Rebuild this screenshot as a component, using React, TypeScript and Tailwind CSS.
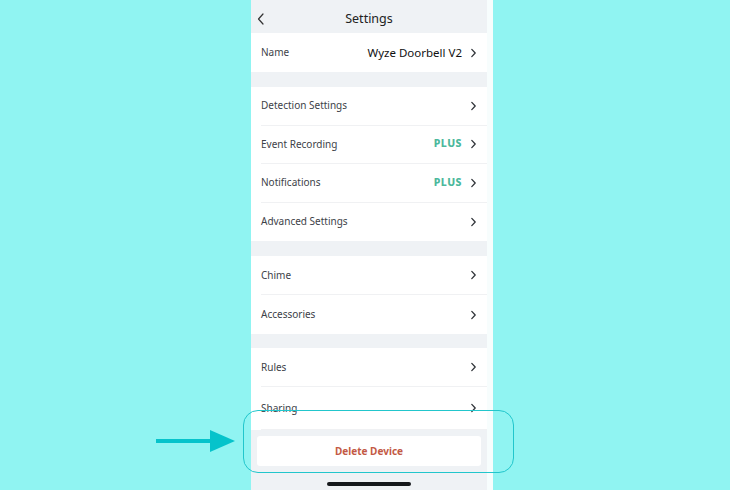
const font = { fontFamily: '"Noto Sans", "Open Sans", sans-serif' };

const Chevron = () => (
  <svg width="7" height="10" viewBox="0 0 7 10" className="shrink-0">
    <path d="M1.8 1.4 L5.2 5 L1.8 8.6" fill="none" stroke="#2f3338" strokeWidth="1.3" strokeLinecap="round" strokeLinejoin="round" />
  </svg>
);

const Row = ({ label, plus, last, h = "h-[38.5px]" }: { label: string; plus?: boolean; last?: boolean; h?: string }) => (
  <div className={`${h} bg-white pl-[10px] flex`}>
    <div className={`flex-1 flex items-center pr-[10px] ${last ? "" : "border-b border-[#f0f1f3]"}`}>
      <span className="text-[10px] text-[#3d4248] flex-1">{label}</span>
      {plus && (
        <span className="text-[10.5px] font-extrabold tracking-[0.5px] text-[#4cb89c] mr-[8px]">PLUS</span>
      )}
      <Chevron />
    </div>
  </div>
);

const Gap = ({ h }: { h: string }) => <div className={`${h} bg-[#eff2f5]`} />;

export default function App() {
  return (
    <div className="relative w-[730px] h-[490px] bg-[#90f4f2] pl-[251px] flex overflow-hidden" style={font}>
      <div className="w-[236px] h-full bg-[#eff2f5] flex flex-col">
        {/* header */}
        <div className="h-[33px] flex items-center pt-[6px] relative">
          <svg width="8" height="12" viewBox="0 0 8 12" className="absolute left-[6px] top-[13px]">
            <path d="M6 1 L1.5 6 L6 11" fill="none" stroke="#333" strokeWidth="1.2" strokeLinecap="round" strokeLinejoin="round" />
          </svg>
          <span className="w-full text-center text-[12.5px] text-[#222]">Settings</span>
        </div>

        <div className="h-[39px] bg-white px-[10px] flex items-center">
          <span className="text-[10px] text-[#3d4248] flex-1">Name</span>
          <span className="text-[11.5px] text-[#111] mr-[8px]">Wyze Doorbell V2</span>
          <Chevron />
        </div>

        <Gap h="h-[15px]" />
        <Row label="Detection Settings" />
        <Row label="Event Recording" plus />
        <Row label="Notifications" plus />
        <Row label="Advanced Settings" last />

        <Gap h="h-[15px]" />
        <Row label="Chime" h="h-[39px]" />
        <Row label="Accessories" h="h-[39px]" last />

        <Gap h="h-[14px]" />
        <Row label="Rules" h="h-[39px]" />
        <Row label="Sharing" h="h-[43px]" />

        <div className="flex-1 flex flex-col items-center pt-[6px]">
          <div className="w-[224px] h-[30px] bg-white rounded-[3px] flex items-center justify-center">
            <span className="text-[10px] font-bold text-[#c35a45]">Delete Device</span>
          </div>
          <div className="mt-[16px] w-[84px] h-[3.5px] rounded-full bg-[#15181b]" />
        </div>
      </div>
      <div className="w-[6px] h-full bg-[#f7fdfd]" />

      {/* highlight outline */}
      <div className="absolute left-[243px] top-[410px] w-[271px] h-[63px] rounded-[15px] border border-[#22c6cc]" />

      {/* arrow */}
      <svg width="85" height="30" viewBox="0 0 85 30" className="absolute left-[154px] top-[426px]">
        <rect x="2" y="13" width="56" height="4" fill="#06c3cb" />
        <polygon points="56,4 81,15 56,26" fill="#06c3cb" />
      </svg>
    </div>
  );
}
